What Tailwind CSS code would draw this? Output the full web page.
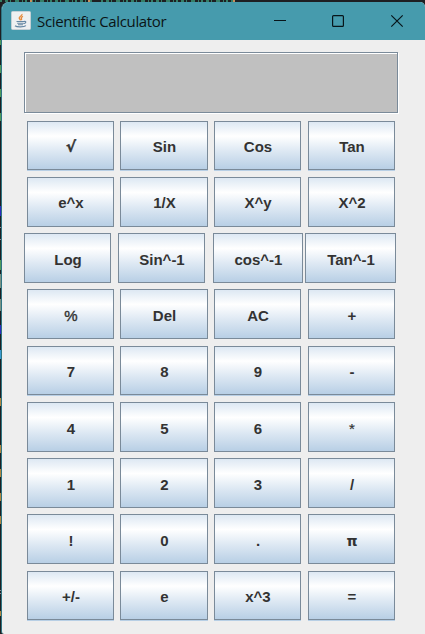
<!DOCTYPE html>
<html lang="en">
<head>
<meta charset="utf-8">
<title>Scientific Calculator</title>
<script src="https://cdn.jsdelivr.net/npm/@tailwindcss/browser@4"></script>
</head>
<body class="relative h-[634px] w-[425px] overflow-hidden bg-[#1e1f22] pt-[2px] pl-px">
<!-- code editor behind the window -->
<svg class="absolute top-0 left-0" width="425" height="634" shape-rendering="crispEdges" fill="none" stroke-width="2">
  <path stroke="#347f68" stroke-dasharray="2 3 3 2 1 4 4 3 1 2" d="M0 1H92M101 1H235" />
  <path stroke="#c9905c" d="M30 1h2M88 1h2M233 1h2" />
  <path stroke="#4f9a5a" d="M1 40v5M1 65v8M1 89v8M1 113v8M1 260v10" />
  <path stroke="#2b2bc0" d="M1 206v10M1 325v9" />
  <path stroke="#7a9285" d="M1 274v14M1 299v12" />
  <path stroke="#3a9ad0" d="M1 350v9" />
  <path stroke="#b3873f" d="M1 398v8M1 445v8M1 469v8M1 493v8M1 516v8M1 611v5" />
  <path stroke="#8c8c96" d="M1 227v1M1 239v1M1 590v1M1 593v1" />
</svg>
<main class="relative h-[632px] overflow-hidden rounded-tl-[8px] rounded-tr-[5px] rounded-bl-[3px] border-l border-[#2e7482] bg-[#eeeeee]">
  <header class="flex h-[38px] items-center bg-[#469bad] pl-[9px]">
    <svg width="20" height="20" viewBox="0 0 20 20" fill="none">
      <rect x=".5" y=".5" width="19" height="18" rx="1" fill="#eef0f1" stroke="#c4d0d5"/>
      <path d="M11 3c.6 2-3.4 2.6-2.8 4.3.3.8 1.2 1.2 1.4 2M12 5.3c-1.6.7-2.3 1.5-1.5 2.4.4.5.1.9-.2 1.3" stroke="#e58a3c" stroke-width="1.3"/>
      <path d="M5.5 10.5h7.5M6.2 12.2h6.3M7 13.7h5M13 10.5c2.6-.6 2.4 1.6-.4 2.3" stroke="#6587a3" stroke-width="1.1"/>
      <path d="M4 14.8c1.8 1.5 9 1.5 11-.2" stroke="#6587a3" stroke-width="1.2"/>
    </svg>
    <h1 class="ml-[6px] flex-1 whitespace-nowrap font-['Open_Sans',sans-serif] text-[15px] leading-5 tracking-[-0.34px] text-[#0b1416]">Scientific Calculator</h1>
    <svg width="151" height="38" fill="none" stroke="#07151a" stroke-width="1.2">
      <path d="M0 18.5h12" shape-rendering="crispEdges"/>
      <rect x="58.6" y="13.6" width="10.8" height="10.8" rx="1"/>
      <path d="m117.3 13.3 11.4 11.4m0-11.4-11.4 11.4"/>
    </svg>
  </header>
  <section class="mt-3 ml-[22px] h-[61px] w-[374px] border border-[#7a8a99] bg-[#c0c0c0] shadow-[inset_1px_1px_0_#fff,1px_1px_0_#fff]"></section>
  <section id="keys" class="mt-2"></section>
</main>
<script>
const frame = "shrink-0 border border-[#7a8a99] bg-[linear-gradient(#dde8f3,#fff_30%,#dde8f3_62%,#b8cfe5)] pl-px text-center text-[#333333]";
const bold = "font-['Liberation_Sans',sans-serif] text-[15px] font-bold";
const special = {
  "√": "font-['DejaVu_Sans',sans-serif] text-[15px] font-bold [-webkit-text-stroke:0.5px_#333]",
  "π": "font-['DejaVu_Sans',sans-serif] text-[14px] font-bold",
  "%": "font-['Liberation_Sans',sans-serif] text-[15px] font-medium [-webkit-text-stroke:0.4px_#333]",
  "*": "font-['Liberation_Sans',sans-serif] text-[15px] font-medium [-webkit-text-stroke:0.2px_#333]"
};
const rows = [
  [["√","Sin","Cos","Tan"], "h-[49px] pt-[4px] shadow-[0_1px_0_#b8cfe5]", "mb-[7px]"],
  [["e^x","1/X","X^y","X^2"], "h-[50px] pt-[2px]", "mb-[6px]"],
  [["Log","Sin^-1","cos^-1","Tan^-1"], "h-[50px] pt-[4px]", "mb-[6px]"],
  [["%","Del","AC","+"], "h-[50px] pt-[4px]", "mb-[7px]"],
  [["7","8","9","-"], "h-[49px] pt-[4px] shadow-[0_1px_0_#b8cfe5]", "mb-[7px]"],
  [["4","5","6","*"], "h-[50px] pt-[4px]", "mb-[6px]"],
  [["1","2","3","/"], "h-[50px] pt-[4px]", "mb-[6px]"],
  [["!","0",".","π"], "h-[50px] pt-[4px]", "mb-[7px]"],
  [["+/-","e","x^3","="], "h-[49px] pt-[4px] shadow-[0_1px_0_#b8cfe5]", ""]
];
const normal = ["w-[87px]", "ml-[6px] w-[88px]", "ml-[6px] w-[87px]", "ml-[7px] w-[87px]"];
const wide = ["w-[87px]", "ml-[7px] w-[87px]", "ml-[8px] w-[90px]", "ml-[2px] w-[91px]"];
document.getElementById("keys").innerHTML = rows.map(([labels, height, gap], r) =>
  `<div class="flex ${r === 2 ? "pl-[22px]" : "pl-[25px]"} ${gap}">` +
  labels.map((label, c) => `<button class="${frame} ${special[label] || bold} ${height} ${(r === 2 ? wide : normal)[c]}">${label}</button>`).join("") +
  `</div>`).join("");
</script>
</body>
</html>
